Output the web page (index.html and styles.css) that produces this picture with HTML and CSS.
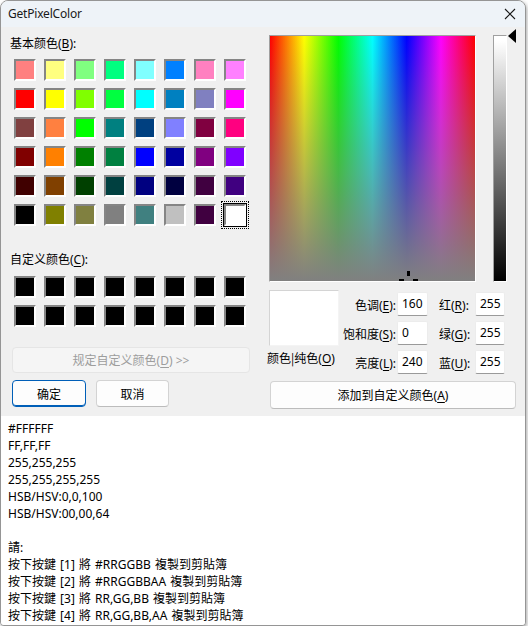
FILE: index.html
```html
<!DOCTYPE html>
<html lang="zh">
<head>
<meta charset="utf-8">
<title>GetPixelColor</title>
<link rel="stylesheet" href="styles.css">
</head>
<body>
<div class="window">
  <div class="titlebar">
    <span class="title">GetPixelColor</span>
    <svg class="close" width="12" height="12" viewBox="0 0 12 12"><path d="M1 1 L11 11 M11 1 L1 11" stroke="#1a1a1a" stroke-width="1.1" fill="none"/></svg>
  </div>
  <div class="client">
    <div class="left">
      <div class="label">基本颜色(<u>B</u>):</div>
      <div class="swatches basic">
        <span class="swatch" style="background:#ff8080"></span><span class="swatch" style="background:#ffff80"></span><span class="swatch" style="background:#80ff80"></span><span class="swatch" style="background:#00ff80"></span><span class="swatch" style="background:#80ffff"></span><span class="swatch" style="background:#0080ff"></span><span class="swatch" style="background:#ff80c0"></span><span class="swatch" style="background:#ff80ff"></span>
        <span class="swatch" style="background:#ff0000"></span><span class="swatch" style="background:#ffff00"></span><span class="swatch" style="background:#80ff00"></span><span class="swatch" style="background:#00ff40"></span><span class="swatch" style="background:#00ffff"></span><span class="swatch" style="background:#0080c0"></span><span class="swatch" style="background:#8080c0"></span><span class="swatch" style="background:#ff00ff"></span>
        <span class="swatch" style="background:#804040"></span><span class="swatch" style="background:#ff8040"></span><span class="swatch" style="background:#00ff00"></span><span class="swatch" style="background:#008080"></span><span class="swatch" style="background:#004080"></span><span class="swatch" style="background:#8080ff"></span><span class="swatch" style="background:#800040"></span><span class="swatch" style="background:#ff0080"></span>
        <span class="swatch" style="background:#800000"></span><span class="swatch" style="background:#ff8000"></span><span class="swatch" style="background:#008000"></span><span class="swatch" style="background:#008040"></span><span class="swatch" style="background:#0000ff"></span><span class="swatch" style="background:#0000a0"></span><span class="swatch" style="background:#800080"></span><span class="swatch" style="background:#8000ff"></span>
        <span class="swatch" style="background:#400000"></span><span class="swatch" style="background:#804000"></span><span class="swatch" style="background:#004000"></span><span class="swatch" style="background:#004040"></span><span class="swatch" style="background:#000080"></span><span class="swatch" style="background:#000040"></span><span class="swatch" style="background:#400040"></span><span class="swatch" style="background:#400080"></span>
        <span class="swatch" style="background:#000000"></span><span class="swatch" style="background:#808000"></span><span class="swatch" style="background:#808040"></span><span class="swatch" style="background:#808080"></span><span class="swatch" style="background:#408080"></span><span class="swatch" style="background:#c0c0c0"></span><span class="swatch" style="background:#400040"></span><span class="swatch selected" style="background:#ffffff"></span>
      </div>
      <div class="label label-custom">自定义颜色(<u>C</u>):</div>
      <div class="swatches custom">
        <span class="swatch black"></span><span class="swatch black"></span><span class="swatch black"></span><span class="swatch black"></span><span class="swatch black"></span><span class="swatch black"></span><span class="swatch black"></span><span class="swatch black"></span>
        <span class="swatch black"></span><span class="swatch black"></span><span class="swatch black"></span><span class="swatch black"></span><span class="swatch black"></span><span class="swatch black"></span><span class="swatch black"></span><span class="swatch black"></span>
      </div>
      <button class="btn btn-disabled">规定自定义颜色(<u>D</u>) &gt;&gt;</button>
      <div class="btnrow">
        <button class="btn btn-default btn-ok">确定</button>
        <button class="btn btn-cancel">取消</button>
      </div>
    </div>
    <div class="right">
      <div class="pickers">
        <div class="spectrum">
          <span class="cross cross-v"></span>
          <span class="cross cross-l"></span>
          <span class="cross cross-r"></span>
        </div>
        <div class="lum">
          <svg class="lum-arrow" width="8" height="14" viewBox="0 0 8 14"><path d="M0 7 L8 0 L8 14 Z" fill="#000"/></svg>
        </div>
      </div>
      <div class="fields">
        <div class="preview"></div>
        <div class="flabel r1">色调(<u>E</u>):</div>
        <div class="field r1">160</div>
        <div class="flabel2 r1">红(<u>R</u>):</div>
        <div class="field field2 r1">255</div>
        <div class="flabel r2">饱和度(<u>S</u>):</div>
        <div class="field r2">0</div>
        <div class="flabel2 r2">绿(<u>G</u>):</div>
        <div class="field field2 r2">255</div>
        <div class="plabel">颜色<span class="bar">|</span>纯色(<u>O</u>)</div>
        <div class="flabel r3">亮度(<u>L</u>):</div>
        <div class="field r3">240</div>
        <div class="flabel2 r3">蓝(<u>U</u>):</div>
        <div class="field field2 r3">255</div>
      </div>
      <button class="btn btn-add">添加到自定义颜色(<u>A</u>)</button>
    </div>
  </div>
  <div class="output">
    <div>#FFFFFF</div>
    <div>FF,FF,FF</div>
    <div>255,255,255</div>
    <div>255,255,255,255</div>
    <div>HSB/HSV:0,0,100</div>
    <div>HSB/HSV:00,00,64</div>
    <div>&nbsp;</div>
    <div>請:</div>
    <div>按下按鍵 [1] 將 #RRGGBB 複製到剪貼簿</div>
    <div>按下按鍵 [2] 將 #RRGGBBAA 複製到剪貼簿</div>
    <div>按下按鍵 [3] 將 RR,GG,BB 複製到剪貼簿</div>
    <div>按下按鍵 [4] 將 RR,GG,BB,AA 複製到剪貼簿</div>
  </div>
</div>
</body>
</html>
```

FILE: styles.css
```css
* { box-sizing: border-box; }

body {
  margin: 0;
  background: #ffffff;
  font-family: "Noto Sans", "Noto Sans CJK SC", sans-serif;
  font-size: 12px;
  color: #000;
}

u { text-decoration: underline; text-underline-offset: 2px; }

.window {
  width: 526px;
  height: 626px;
  border: 1px solid #959595;
  border-radius: 8px 8px 4px 4px;
  overflow: hidden;
  display: flex;
  flex-direction: column;
  background: #f0f0f0;
  box-shadow: 1px 2px 4px rgba(0, 0, 0, 0.35);
}

.titlebar {
  flex: none;
  height: 26px;
  background: #eef3f8;
  display: flex;
  align-items: center;
  justify-content: space-between;
  padding: 0 9px 0 7px;
}

.title { font-size: 12px; line-height: 16px; color: #1a1a1a; letter-spacing: -0.2px; }

.close { display: block; }

.client {
  flex: none;
  height: 389px;
  display: flex;
}

.left {
  width: 266px;
  padding-left: 9px;
}

.label {
  margin-top: 9px;
  line-height: 16px;
  height: 16px;
}

.label-custom { margin-top: 26px; }

.swatches {
  display: grid;
  grid-template-columns: repeat(8, 22px);
  column-gap: 8px;
  row-gap: 7px;
  margin: 7px 0 0 4px;
}

.swatches.custom { margin-top: 8px; }

.swatch {
  display: block;
  width: 22px;
  height: 22px;
  border: 2px solid;
  border-color: #858585 #ffffff #ffffff #858585;
}

.swatch.black { background: #000; }

.swatch.selected {
  box-shadow: 0 0 0 1px #000;
  outline: 1px dotted #000;
  outline-offset: 2px;
}

.btn {
  font: inherit;
  font-size: 12px;
  color: #000;
  background: #fdfdfd;
  border: 1px solid #d3d3d3;
  border-bottom-color: #bcbcbc;
  border-radius: 4px;
  padding: 0;
  display: flex;
  align-items: center;
  justify-content: center;
}

.btn-disabled {
  margin: 20px 0 0 2px;
  width: 238px;
  height: 26px;
  background: #f5f5f5;
  border-color: #e5e5e5;
  color: #9d9d9d;
}

.btnrow {
  display: flex;
  gap: 10px;
  margin: 7px 0 0 2px;
}

.btn-ok, .btn-cancel { height: 27px; }
.btn-ok { width: 74px; }
.btn-cancel { width: 73px; }

.btn-default {
  border: 1px solid #005fb8;
  box-shadow: inset 0 -1px 0 #005fb8;
}

.right { flex: 1; }

.pickers {
  display: flex;
  margin: 8px 0 0 2px;
}

.spectrum {
  position: relative;
  width: 207px;
  height: 247px;
  border: 1px solid;
  border-color: #a0a0a0 #ffffff #ffffff #a0a0a0;
  overflow: hidden;
  background:
    linear-gradient(to bottom, rgba(128,128,128,0) 0%, #808080 100%),
    linear-gradient(to right, #ff0000 0%, #ffff00 16.67%, #00ff00 33.33%, #00ffff 50%, #0000ff 66.67%, #ff00ff 83.33%, #ff0000 100%);
}

.cross { position: absolute; background: #000; }
.cross-v { left: 137px; top: 235px; width: 3px; height: 5px; }
.cross-l { left: 129px; top: 243px; width: 5px; height: 3px; }
.cross-r { left: 143px; top: 243px; width: 5px; height: 3px; }

.lum {
  position: relative;
  margin-left: 17px;
  width: 14px;
  height: 247px;
  border: 1px solid;
  border-color: #a0a0a0 #ffffff #ffffff #a0a0a0;
  background: linear-gradient(to bottom, #ffffff 0%, #ffffff 2%, #000000 100%);
}

.lum-arrow {
  position: absolute;
  left: 14px;
  top: -7px;
  display: block;
}

.fields {
  display: grid;
  grid-template-columns: 72px 58px 31px 47px 30px;
  grid-template-rows: 29px 29px 29px;
  margin-top: 8px;
}

.preview {
  grid-column: 1;
  grid-row: 1 / span 2;
  margin-left: 2px;
  width: 70px;
  height: 56px;
  background: #fff;
  border: 1px solid;
  border-color: #d4d4d4 #f4f4f4 #f4f4f4 #d4d4d4;
}

.plabel {
  grid-column: 1;
  grid-row: 3;
  margin-top: 2px;
  line-height: 16px;
  white-space: nowrap;
}

.plabel .bar { font-family: "Noto Sans CJK SC", sans-serif; }

.r1 { grid-row: 1; }
.r2 { grid-row: 2; }
.r3 { grid-row: 3; }

.flabel {
  grid-column: 2;
  text-align: right;
  padding-right: 1px;
  align-self: center;
  line-height: 16px;
  margin-top: 2px;
  white-space: nowrap;
}

.flabel2 {
  grid-column: 4;
  padding-left: 11px;
  align-self: center;
  line-height: 16px;
  margin-top: 2px;
  white-space: nowrap;
}

.field {
  grid-column: 3;
  margin-top: 2px;
  height: 24px;
  background: #fff;
  border: 1px solid #ececec;
  border-bottom-color: #9a9a9a;
  border-radius: 2px;
  padding-left: 4px;
  line-height: 21px;
}

.field2 { grid-column: 5; }

.btn-add {
  margin: 4px 0 0 3px;
  width: 246px;
  height: 28px;
}

.output {
  flex: 1;
  background: #fff;
  padding: 4px 7px;
  line-height: 17px;
  font-size: 12px;
  word-spacing: 1px;
}
```
